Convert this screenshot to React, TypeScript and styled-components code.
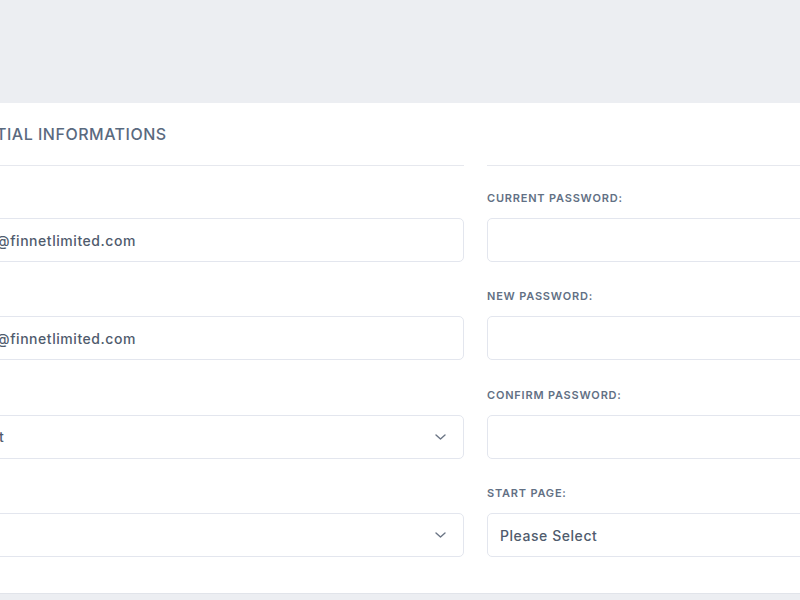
import styled, { createGlobalStyle } from 'styled-components'

const GlobalStyle = createGlobalStyle`
  html, body {
    margin: 0;
    padding: 0;
    width: 800px;
    height: 600px;
    overflow: hidden;
    background: #eceef2;
    font-family: Inter, 'Open Sans', sans-serif;
  }
  * { box-sizing: border-box; }
`

const Page = styled.div`
  padding-top: 103px;
  width: 800px;
  height: 600px;
`

const Card = styled.section`
  width: 1251px;
  height: 491px;
  margin-left: -150px;
  background: #ffffff;
  border-bottom: 1px solid #e1e4ea;
  padding: 0 44px;
`

const Header = styled.header`
  height: 62px;
  display: flex;
  align-items: center;
  padding-left: 34px;
`

const Title = styled.h2`
  margin: 0;
  font-size: 16px;
  font-weight: 500;
  letter-spacing: 0.5px;
  color: #5a6a7f;
  text-transform: uppercase;
`

const Columns = styled.div`
  display: grid;
  grid-template-columns: 570px 570px;
  column-gap: 23px;
`

const Column = styled.div`
  border-top: 1px solid #e6e8ee;
  padding-top: 24px;
`

const Field = styled.div`
  margin-bottom: 26.4px;
`

const Label = styled.label`
  display: block;
  height: 16px;
  line-height: 16px;
  margin-bottom: 12px;
  font-size: 11px;
  font-weight: 600;
  letter-spacing: 0.8px;
  color: #627084;
  text-transform: uppercase;
`

const Box = styled.div`
  position: relative;
  height: 44px;
  border: 1px solid #e3e6ee;
  border-radius: 5px;
  background: #fff;
  padding: 0 12px;
  display: flex;
  align-items: center;
  font-size: 14px;
  font-weight: 500;
  letter-spacing: 0.55px;
  color: #4f5b6d;
`

const Chevron = styled.svg`
  position: absolute;
  right: 17px;
  top: 50%;
  margin-top: -3px;
`

const Arrow = () => (
  <Chevron width="11" height="6" viewBox="0 0 11 6" fill="none">
    <path d="M1 1l4.5 4L10 1" stroke="#6b7585" strokeWidth="1.4" strokeLinecap="round" strokeLinejoin="round" />
  </Chevron>
)

type FieldProps = { label: string; value?: string; select?: boolean }

const FormField = ({ label, value, select }: FieldProps) => (
  <Field>
    <Label>{label}</Label>
    <Box>
      {value}
      {select && <Arrow />}
    </Box>
  </Field>
)

const App = () => (
  <>
    <GlobalStyle />
    <Page>
      <Card>
        <Header>
          <Title>Credential Informations</Title>
        </Header>
        <Columns>
          <Column>
            <FormField label="Username:" value="accountants@finnetlimited.com" />
            <FormField label="E-mail:" value="accountants@finnetlimited.com" />
            <FormField label="Language:" value="Please Select" select />
            <FormField label="Time zone:" select />
          </Column>
          <Column>
            <FormField label="Current Password:" />
            <FormField label="New Password:" />
            <FormField label="Confirm Password:" />
            <FormField label="Start Page:" value="Please Select" />
          </Column>
        </Columns>
      </Card>
    </Page>
  </>
)

export default App
